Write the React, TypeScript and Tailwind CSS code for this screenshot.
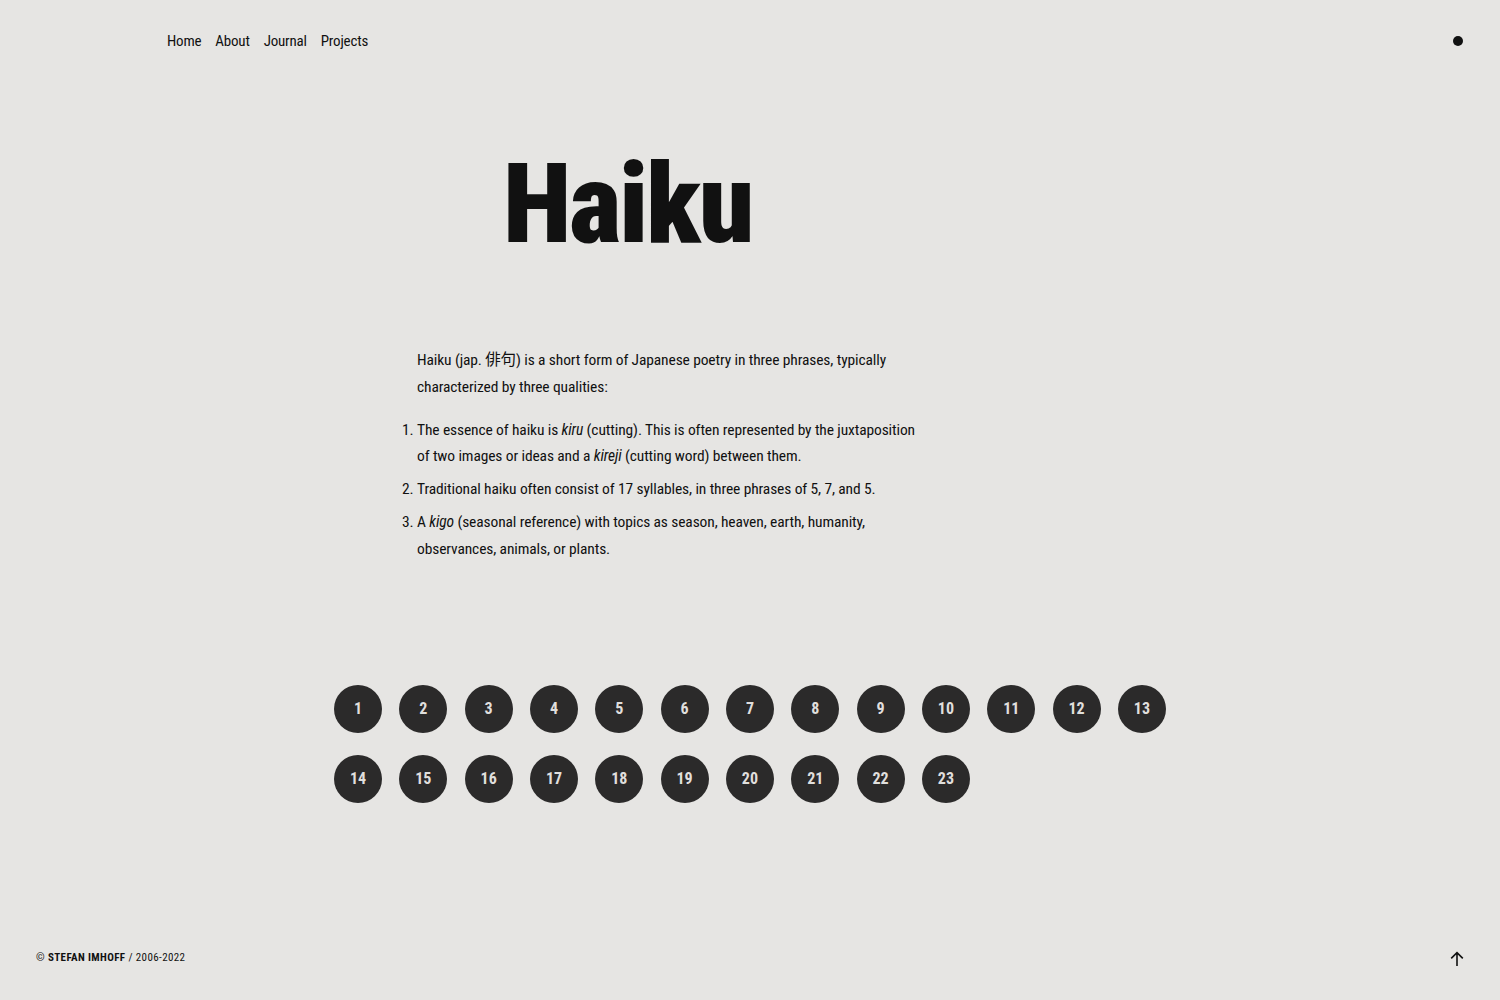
export default function App() {
  const nums = Array.from({ length: 23 }, (_, i) => i + 1);
  return (
    <div className="min-h-screen bg-[#e6e5e3] text-[#111] flex flex-col font-['Roboto_Condensed','Noto_Sans_CJK_JP',sans-serif]">
      <header className="h-[82px] flex items-center justify-between pl-[167px] pr-[37px]">
        <nav className="flex gap-[14px] text-[15px] tracking-[-0.2px]">
          <a>Home</a>
          <a>About</a>
          <a>Journal</a>
          <a>Projects</a>
        </nav>
        <span className="w-[10px] h-[10px] rounded-full bg-[#111]" />
      </header>

      <main className="flex-1 flex flex-col">
        <h1 className="pl-[503px] mt-[66px] text-[112px] font-black leading-none tracking-[-0.02em]">Haiku</h1>

        <section className="ml-[417px] mt-[87px] w-[505px] text-[15.5px] leading-[26.5px] tracking-[-0.12px]">
          <p>Haiku (jap. 俳句) is a short form of Japanese poetry in three phrases, typically characterized by three qualities:</p>
          <ol className="list-decimal mt-[16.5px] flex flex-col gap-[6.5px]">
            <li>The essence of haiku is <em>kiru</em> (cutting). This is often represented by the juxtaposition of two images or ideas and a <em>kireji</em> (cutting word) between them.</li>
            <li>Traditional haiku often consist of 17 syllables, in three phrases of 5, 7, and 5.</li>
            <li>A <em>kigo</em> (seasonal reference) with topics as season, heaven, earth, humanity, observances, animals, or plants.</li>
          </ol>
        </section>

        <div className="mt-[123px] ml-[334px] w-[832px] grid grid-cols-13 gap-x-[17.25px] gap-y-[22px]">
          {nums.map((n) => (
            <a key={n} className="w-[48px] h-[48px] rounded-full bg-[#2b2a2a] text-[#e0dfdd] font-bold text-[16px] flex items-center justify-center">
              {n}
            </a>
          ))}
        </div>
      </main>

      <footer className="h-[86px] flex items-center justify-between pl-[36px] pr-[36px] text-[11px] tracking-[0.035em]">
        <p className="mt-[2px]">
          © <strong className="font-bold">STEFAN IMHOFF</strong> / 2006-2022
        </p>
        <svg className="mt-[3px]" width="14" height="16" viewBox="0 0 14 16" fill="none" stroke="#111" strokeWidth="1.6">
          <path d="M7 15V1.8M1.2 7.4 7 1.6l5.8 5.8" />
        </svg>
      </footer>
    </div>
  );
}
